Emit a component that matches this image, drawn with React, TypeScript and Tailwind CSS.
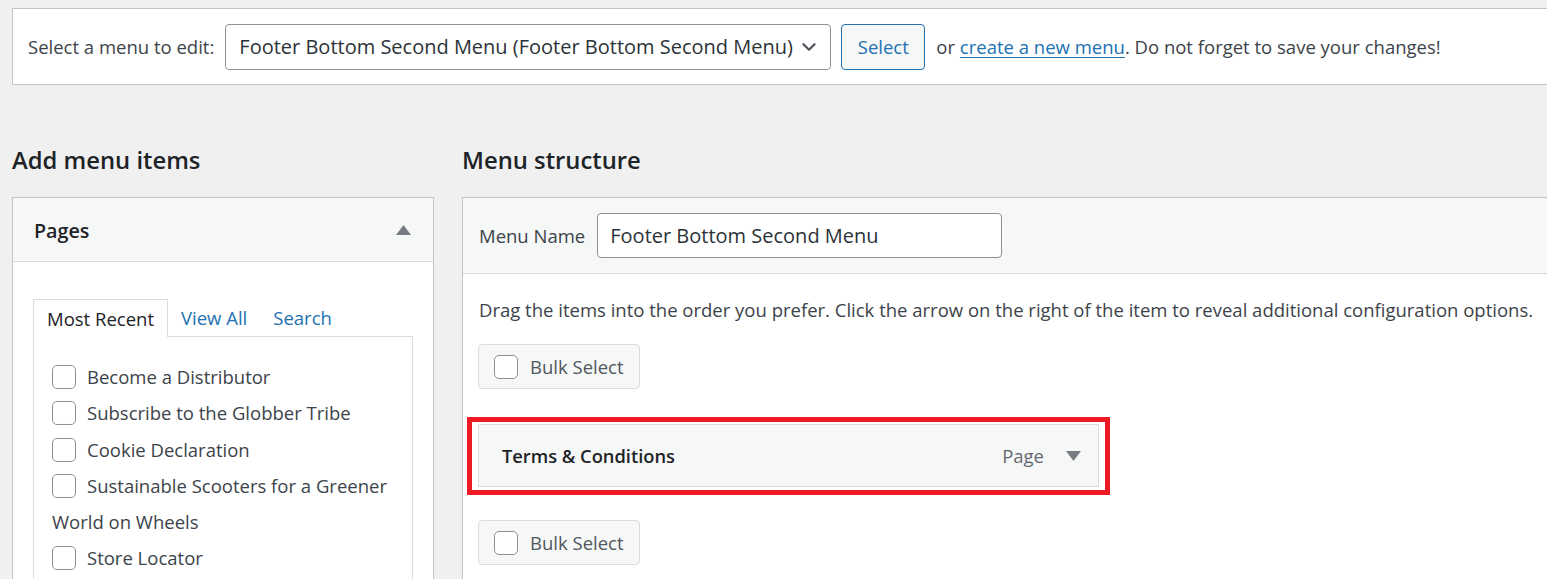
import { ChevronDown } from "lucide-react";

function Checkbox({ className = "" }: { className?: string }) {
	return (
		<span
			className={`inline-block w-6 h-6 rounded-[5px] border-[1.5px] border-[#8c8f94] bg-white shrink-0 ${className}`}
		/>
	);
}

function BulkSelect() {
	return (
		<div className="inline-flex items-center gap-3 h-[45px] px-[15px] bg-[#f6f7f7] border border-[#dcdcde] rounded-[4px] text-[#50575e]">
			<Checkbox />
			<span>Bulk Select</span>
		</div>
	);
}

const pages = [
	"Become a Distributor",
	"Subscribe to the Globber Tribe",
	"Cookie Declaration",
	"Sustainable Scooters for a Greener World on Wheels",
	"Store Locator",
];

export default function App() {
	return (
		<div className="h-screen overflow-hidden bg-[#f0f0f1] font-['Open_Sans',sans-serif] text-[18.5px] text-[#3c434a] pl-3 pt-2">
			{/* menu picker */}
			<div className="h-[77px] bg-white border border-r-0 border-[#c3c4c7] flex items-center pl-[15px] whitespace-nowrap">
				<span>Select a menu to edit:</span>
				<div className="ml-[11px] w-[606px] h-[46px] border border-[#8c8f94] rounded-[4px] flex items-center justify-between pl-[13px] pr-[10px] text-[#2c3338] text-[20px]">
					<span>Footer Bottom Second Menu (Footer Bottom Second Menu)</span>
					<ChevronDown size={22} strokeWidth={2.6} className="text-[#50575e]" />
				</div>
				<div className="ml-[10px] w-[84px] h-[46px] border border-[#2271b1] rounded-[4px] bg-[#f6f7f7] text-[#2271b1] flex items-center justify-center">
					Select
				</div>
				<span className="ml-[11px]">
					or{" "}
					<a className="text-[#2271b1] underline underline-offset-[3px]">create a new menu</a>. Do not forget
					to save your changes!
				</span>
			</div>

			<div className="flex gap-[28px]">
				{/* left column */}
				<div className="w-[422px] shrink-0">
					<h2 className="pt-[60px] mb-[22px] leading-[30px] text-[23.8px] font-semibold text-[#1d2327]">
						Add menu items
					</h2>
					<div className="bg-white border border-[#c3c4c7] h-[400px]">
						<div className="h-[64px] bg-[#f6f7f7] border-b border-[#dcdcde] flex items-center justify-between pl-[21px] pr-[22px]">
							<span className="text-[19.7px] font-semibold text-[#1d2327] pt-[2px]">Pages</span>
							<svg width="15" height="10" viewBox="0 0 15 10">
								<path d="M7.5 0 L15 10 L0 10 Z" fill="#787c82" />
							</svg>
						</div>
						<div className="pt-[37px] pl-[20px] pr-[20px]">
							<div className="flex relative z-10">
								<div className="h-[38px] px-[13px] flex items-center border border-b-0 border-[#dcdcde] bg-white text-[#1d2327]">
									Most Recent
								</div>
								<div className="h-[38px] px-[13px] flex items-center text-[#2271b1]">View All</div>
								<div className="h-[38px] px-[13px] flex items-center text-[#2271b1]">Search</div>
							</div>
							<div className="-mt-px border border-[#dcdcde] h-[400px] pt-[22px] pl-[18px] pr-[10px]">
								{pages.map((p) => (
									<div key={p} className="leading-[36.25px]">
										<Checkbox className="align-top mt-[6px]" />
										<span className="ml-[11px]">{p}</span>
									</div>
								))}
							</div>
						</div>
					</div>
				</div>

				{/* right column */}
				<div className="flex-1">
					<h2 className="pt-[60px] mb-[22px] leading-[30px] text-[23.8px] font-semibold text-[#1d2327]">
						Menu structure
					</h2>
					<div className="bg-white border border-r-0 border-[#c3c4c7] h-[400px]">
						<div className="h-[76px] bg-[#f6f7f7] border-b border-[#dcdcde] flex items-center pl-[16px]">
							<span className="pt-px">Menu Name</span>
							<div className="ml-3 w-[405px] h-[45px] border border-[#8c8f94] rounded-[4px] bg-white flex items-center px-3 pt-px text-[#2c3338] text-[20px]">
								Footer Bottom Second Menu
							</div>
						</div>
						<div className="pl-[15px]">
							<p className="pt-[23px] leading-[26px] pl-px whitespace-nowrap">
								Drag the items into the order you prefer. Click the arrow on the right of the item to reveal
								additional configuration options.
							</p>
							<div className="mt-[21px]">
								<BulkSelect />
							</div>
							<div className="relative mt-[35px] w-[621px]">
								<div className="h-[63px] bg-[#f6f7f7] border border-[#dcdcde] flex items-center justify-between pl-[23px] pr-[17px]">
									<span className="font-semibold text-[18.3px] text-[#1d2327]">Terms &amp; Conditions</span>
									<div className="flex items-center gap-[22px]">
										<span className="text-[#646970]">Page</span>
										<svg width="15" height="10" viewBox="0 0 15 10">
											<path d="M0 0 L15 0 L7.5 10 Z" fill="#787c82" />
										</svg>
									</div>
								</div>
								{/* red annotation */}
								<div className="absolute -left-[11px] -top-[7px] -right-[11px] -bottom-[8px] border-[5px] border-[#ed1c24] pointer-events-none" />
							</div>
							<div className="mt-[33px]">
								<BulkSelect />
							</div>
						</div>
					</div>
				</div>
			</div>
		</div>
	);
}
